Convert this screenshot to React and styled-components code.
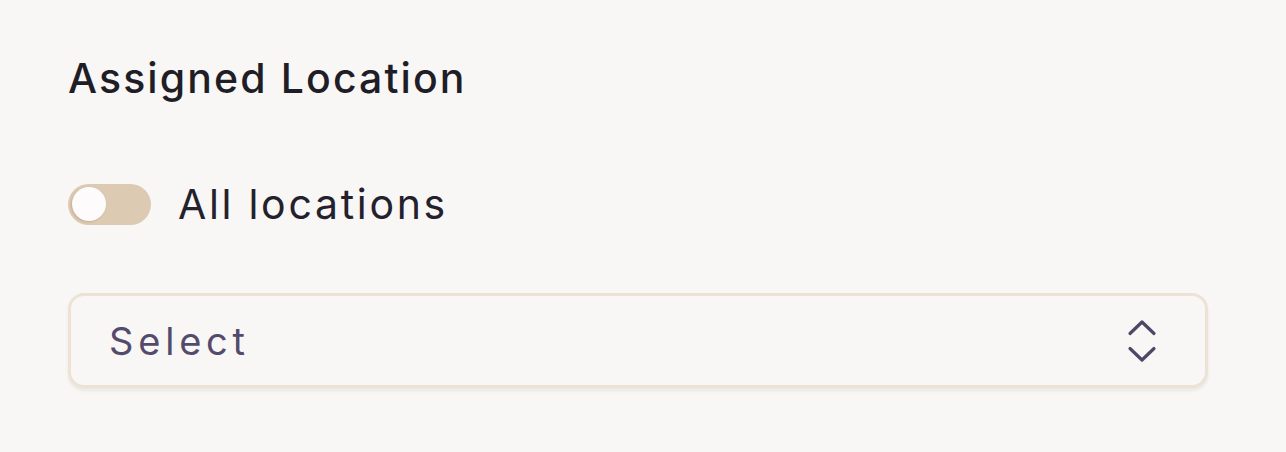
import React from "react";
import styled, { createGlobalStyle } from "styled-components";

const GlobalStyle = createGlobalStyle`
  html, body {
    margin: 0;
    padding: 0;
    background: #f8f7f5;
  }
  body {
    font-family: Inter, "Open Sans", sans-serif;
  }
`;

const Page = styled.div`
  padding: 54px 78px 40px 68px;
  display: flex;
  flex-direction: column;
`;

const Title = styled.h2`
  margin: 0;
  font-family: Inter, sans-serif;
  font-weight: 500;
  font-size: 41px;
  line-height: 48px;
  letter-spacing: 2.1px;
  color: #1f1d26;
`;

const ToggleRow = styled.label`
  margin-top: 81px;
  display: flex;
  align-items: center;
  gap: 27px;
  height: 42px;
  cursor: pointer;
`;

const Track = styled.span`
  position: relative;
  display: inline-flex;
  align-items: center;
  width: 83px;
  height: 41px;
  border-radius: 999px;
  background: ${(p) => (p.$on ? "#6b5f8a" : "#ddcab3")};
  padding: 0 4px;
  box-sizing: border-box;
  flex: none;
`;

const Knob = styled.span`
  width: 34px;
  height: 34px;
  border-radius: 50%;
  background: #fdfbfc;
  box-shadow: -1px 1px 2px rgba(120, 95, 60, 0.25);
  margin-left: ${(p) => (p.$on ? "auto" : "0")};
`;

const ToggleText = styled.span`
  font-family: Inter, sans-serif;
  font-weight: 400;
  font-size: 41px;
  letter-spacing: 2.7px;
  color: #23212b;
`;

const SelectBox = styled.button`
  margin-top: 68px;
  width: 100%;
  height: 95px;
  box-sizing: border-box;
  display: flex;
  align-items: center;
  justify-content: space-between;
  padding: 0 48px 0 38px;
  background: #f9f7f6;
  border: 3px solid #ece2d6;
  border-radius: 16px;
  box-shadow: 0 3px 3px rgba(150, 130, 110, 0.12);
  cursor: pointer;
`;

const SelectText = styled.span`
  font-family: Inter, sans-serif;
  font-size: 38px;
  letter-spacing: 4.8px;
  color: #544b6c;
`;

const ChevronIcon = () => (
  <svg width="30" height="44" viewBox="0 0 30 44" fill="none">
    <path
      d="M3 14.5 L15 3 L27 14.5"
      stroke="#4e4766"
      strokeWidth="3.2"
      strokeLinecap="round"
      strokeLinejoin="round"
    />
    <path
      d="M3 29.5 L15 41 L27 29.5"
      stroke="#4e4766"
      strokeWidth="3.2"
      strokeLinecap="round"
      strokeLinejoin="round"
    />
  </svg>
);

export default function App() {
  const [on, setOn] = React.useState(false);
  return (
    <>
      <GlobalStyle />
      <Page>
        <Title>Assigned Location</Title>
        <ToggleRow onClick={() => setOn((v) => !v)}>
          <Track $on={on}>
            <Knob $on={on} />
          </Track>
          <ToggleText>All locations</ToggleText>
        </ToggleRow>
        <SelectBox type="button">
          <SelectText>Select</SelectText>
          <ChevronIcon />
        </SelectBox>
      </Page>
    </>
  );
}
